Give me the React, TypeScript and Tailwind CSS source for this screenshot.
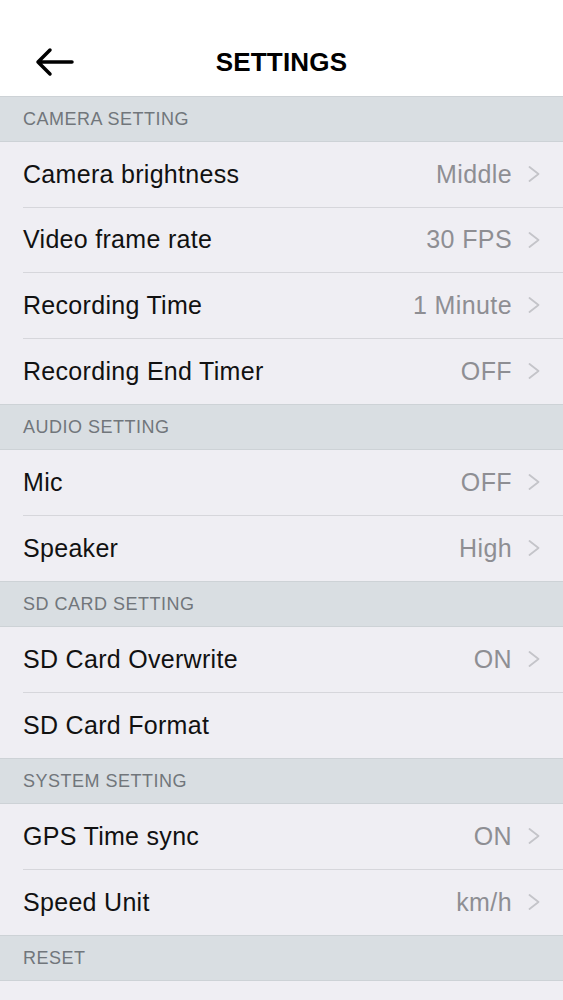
import React from "react";

type Row = { label: string; value?: string; chevron?: boolean };
type Section = { title: string; rows: Row[] };

const sections: Section[] = [
  {
    title: "CAMERA SETTING",
    rows: [
      { label: "Camera brightness", value: "Middle", chevron: true },
      { label: "Video frame rate", value: "30 FPS", chevron: true },
      { label: "Recording Time", value: "1 Minute", chevron: true },
      { label: "Recording End Timer", value: "OFF", chevron: true },
    ],
  },
  {
    title: "AUDIO SETTING",
    rows: [
      { label: "Mic", value: "OFF", chevron: true },
      { label: "Speaker", value: "High", chevron: true },
    ],
  },
  {
    title: "SD CARD SETTING",
    rows: [
      { label: "SD Card Overwrite", value: "ON", chevron: true },
      { label: "SD Card Format" },
    ],
  },
  {
    title: "SYSTEM SETTING",
    rows: [
      { label: "GPS Time sync", value: "ON", chevron: true },
      { label: "Speed Unit", value: "km/h", chevron: true },
    ],
  },
  {
    title: "RESET",
    rows: [{ label: "" }],
  },
];

function Chevron() {
  return (
    <svg width="12" height="20" viewBox="0 0 12 20" className="shrink-0">
      <path d="M1.5 3 L10.5 10 L1.5 17" fill="none" stroke="#c4c4c9" strokeWidth="1.8" strokeLinecap="round" strokeLinejoin="round" />
    </svg>
  );
}

export default function App() {
  return (
    <div className="w-[563px] h-[1000px] overflow-hidden bg-[#efeef3]" style={{ fontFamily: '"Liberation Sans", Arial, sans-serif' }}>
      <div className="relative h-[96px] bg-white flex items-center justify-center pt-[28px]">
        <svg className="absolute left-[34px] top-[46px]" width="42" height="32" viewBox="0 0 42 32">
          <path d="M4 16 H38 M16 4 L4 16 L16 28" fill="none" stroke="#000" strokeWidth="3.5" strokeLinecap="round" strokeLinejoin="round" />
        </svg>
        <div className="text-[26px] font-bold text-black tracking-[0.2px]">SETTINGS</div>
      </div>
      {sections.map((s) => (
        <div key={s.title}>
          <div className="h-[46px] bg-[#d9dee2] border-y border-[#cdd2d6] flex items-center pl-[23px] text-[18px] tracking-[0.5px] text-[#71767b]">
            {s.title}
          </div>
          {s.rows.map((r, i) => (
            <div key={i} className="h-[65.5px] pl-[23px] bg-[#efeef3]">
              <div className={`h-full flex items-center pr-[23px] ${i < s.rows.length - 1 ? "border-b border-[#d6d6db]" : ""}`}>
                <div className="flex-1 text-[25px] tracking-[0.3px] text-[#111]">{r.label}</div>
                {r.value && <div className="text-[25px] tracking-[0.4px] text-[#8e8e93] mr-[16px]">{r.value}</div>}
                {r.chevron && <Chevron />}
              </div>
            </div>
          ))}
        </div>
      ))}
    </div>
  );
}
